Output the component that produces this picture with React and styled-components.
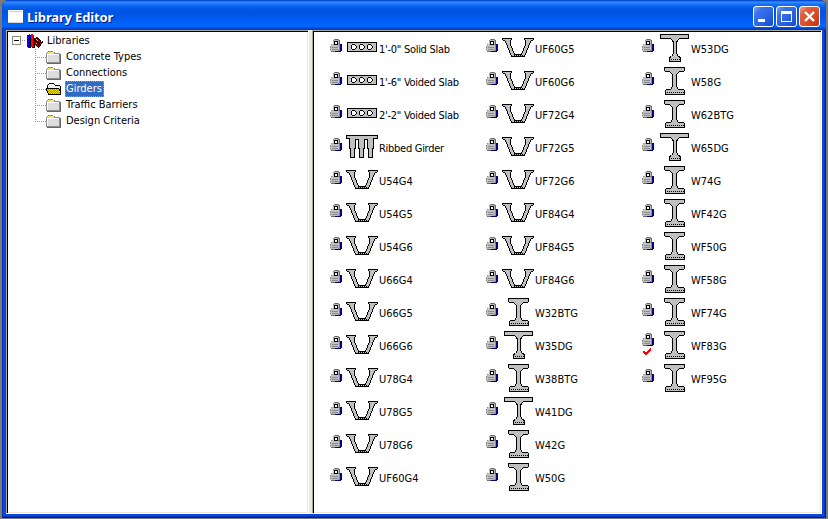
import React from "react";
import styled, { createGlobalStyle, css } from "styled-components";

const GlobalStyle = createGlobalStyle`
  html, body { margin: 0; height: 100%; overflow: hidden; background: #7d7b7a; }
  * { box-sizing: border-box; }
  svg { display: block; flex: none; }
`;

const Desktop = styled.div`
  width: 828px;
  height: 519px;
  padding: 0 2px 1px;
  background: #7d7b7a;
  font-family: "DejaVu Sans Condensed", "DejaVu Sans", sans-serif;
  font-stretch: condensed;
  font-size: 11px;
  color: #000;
`;

const Window = styled.div`
  height: 518px;
  display: flex;
  flex-direction: column;
  padding: 0 4px 4px;
  border-radius: 7px 7px 0 0;
  overflow: hidden;
  background: #0b48de;
  box-shadow: inset 1px 0 #0831b8, inset -1px 0 #001a94, inset -2px 0 #0636c4, inset 0 -1px #001a94, inset 0 -2px #0636c4;
`;

const TitleBar = styled.header`
  height: 30px;
  flex: none;
  display: flex;
  align-items: center;
  margin: 0 -4px;
  padding: 3px 6px 0 6px;
  background: linear-gradient(
    #0644c8 0, #0a55e0 1px, #3a91ff 2px, #1674fa 4px, #0560ea 7px,
    #0054e3 10px, #0055e5 15px, #005cf2 20px, #0166ff 25px, #0162f5 27px, #0049d2 28px, #003dc0 30px
  );
`;

const Title = styled.h1`
  flex: 1;
  margin: 0 0 0 4px;
  font: bold 13px/18px "Noto Sans", sans-serif;
  letter-spacing: -0.15px;
  color: #fff;
  text-shadow: 1px 1px #0a1883;
`;

const Buttons = styled.div`
  display: flex;
  gap: 2px;
`;

const CaptionButton = styled.button`
  width: 21px;
  height: 21px;
  padding: 0;
  border: 1px solid #fff;
  border-radius: 3px;
  background: ${(p) =>
    p.$close
      ? "linear-gradient(135deg, #f0a088 0, #e0603c 25%, #dc4c24 60%, #b83410 100%)"
      : "linear-gradient(135deg, #7ba4f4 0, #3c72ea 25%, #2860e2 65%, #1748c4 100%)"};
`;

const Client = styled.div`
  flex: 1;
  display: flex;
  background: #ece9d8;
`;

const pane = css`
  background: #fff;
  border-style: solid;
  border-width: 1px;
  border-color: #aca899 #fff #fff #aca899;
  box-shadow: inset 1px 1px #000, inset -1px -1px #ece9d8;
`;

const TreePane = styled.nav`
  ${pane}
  width: 303px;
  padding: 2px 0 0 5px;
`;

const ListPane = styled.main`
  ${pane}
  flex: 1;
  margin-left: 3px;
  padding: 2px 0 0 17px;
  display: grid;
  grid-auto-flow: column;
  grid-template-rows: repeat(14, 33px);
  grid-template-columns: repeat(3, 156px);
`;

const TreeRow = styled.div`
  height: 16px;
  display: flex;
  align-items: center;
`;

const TreeLabel = styled.span`
  height: 16px;
  line-height: 15px;
  margin-left: ${(p) => (p.$root ? 3 : 4)}px;
  padding: 0 2px 0 1px;
  white-space: nowrap;
  ${(p) =>
    p.$selected &&
    css`
      color: #fff;
      background: #316ac5;
      outline: 1px dotted #ce953a;
      outline-offset: -1px;
    `}
`;

const Item = styled.div`
  height: 33px;
  display: flex;
  align-items: flex-start;
`;

const StateIcon = styled.div`
  width: 12px;
  height: 24px;
  padding-top: ${(p) => (p.$checked ? 3 : 6)}px;
  margin-right: 4px;
`;

const ItemLabel = styled.span`
  margin-left: 1px;
  line-height: 34px;
  letter-spacing: ${(p) => (p.$tight ? -0.28 : 0)}px;
  white-space: nowrap;
`;

const COLORS = {
  k: "#000", d: "#686868", g: "#c0c0c0", s: "#8c8c8c", n: "#000080", w: "#fff",
  r: "#f00", m: "#800000", b: "#0000ff", y: "#f4ee6c", p: "#d8d8d8", Y: "#f0e000", V: "#a89800",
};

function Pixels({ rows }) {
  const w = Math.max(...rows.map((r) => r.length));
  return (
    <svg width={w} height={rows.length} shapeRendering="crispEdges">
      {rows.flatMap((row, y) =>
        [...row].map((c, x) =>
          COLORS[c] ? <rect key={`${x}-${y}`} x={x} y={y} width="1" height="1" fill={COLORS[c]} /> : null
        )
      )}
    </svg>
  );
}

const LOCK = [
  "....sddds...",
  "...sggggsd..",
  "...gkkkkgd..",
  "...gkwwkgd..",
  "...gkwwngd..",
  ".sggkkknsdnn",
  ".ggggggggsnn",
  "sggggggggsnn",
  "sgssssssgsnn",
  "gggggggggsnn",
  "sgssssssgsnn",
  "ggggggggssnn",
  ".ddddnnnnnn.",
];

const CHECK = [
  ".......r",
  "......rr",
  ".....rrr",
  "rr..rrr.",
  "rrrrrr..",
  ".rrrr...",
  "..rr....",
];

const FOLDER = [
  "..sssss........",
  ".sypypyps......",
  "sypypypyssssss.",
  "swwwwwwwwwwwwsd",
  "swypypypypypysd",
  "swpypypypypypsd",
  "swypypypypypysd",
  "swpypypypypypsd",
  "swypypypypypysd",
  "swpypypypypypsd",
  "swypypypypypysd",
  "ssssssssssssssd",
  ".dddddddddddddd",
];

const OPEN_FOLDER = [
  "...kkkkk.......",
  "..kwwwwwk......",
  ".kwywywywkkkkk.",
  ".kwywywywywywyk",
  ".kywywywywywywk",
  "kkkkkkkkkkkkkyk",
  "kYVYVYVYVYVYVkk",
  "kVYVYVYVYVYVYkk",
  ".kVYVYVYVYVYVYk",
  ".kYVYVYVYVYVYVk",
  "..kYVYVYVYVYVYk",
  "..kkkkkkkkkkkkk",
];

const BOOKS = [
  "..b.rr..........",
  "bbbbrrr.........",
  "bbbbrrr.........",
  "bbnkrrm..mm.....",
  "bbnkrrmkmmmk....",
  "bbnkrrmkmgmmk...",
  "bbnkrrmkkmgmmk..",
  "bbnkrrmkmkkmmk.k",
  "bbnkrrmmmmkkmmkk",
  "bbnkrrmkmgmkkmk.",
  "bbnkrrmkkmmmkk..",
  "bbnkrrmkgkmmmk..",
  "bbbkrrrk.gkmk...",
  ".kkk.kkk...k....",
];

const stroke = { fill: "#c0c0c0", stroke: "#000", strokeWidth: 1, shapeRendering: "crispEdges" };

function Strands({ from, to, y }) {
  const xs = [];
  for (let x = from; x <= to; x += 2) xs.push(x);
  return xs.map((x) => <rect key={x} x={x} y={y} width="1" height="1" fill="#000" shapeRendering="crispEdges" />);
}

function Section({ kind }) {
  return (
    <svg width="32" height="32">
      {kind === "slab" && (
        <>
          <rect x="1.5" y="9.5" width="29" height="9" {...stroke} />
          {[8, 16, 24].map((x) => (
            <path key={x} d={`M${x - 1.5} 11.5h2l1.5 1.5v2l-1.5 1.5h-2l-1.5-1.5v-2z`} {...stroke} fill="#fff" />
          ))}
        </>
      )}
      {kind === "ribbed" && (
        <path d="M.5 3.5H31.5V6.5H27.5V16.5H26.5V25.5H22.5V16.5H21.5V7.5H18.5V16.5H17.5V25.5H13.5V16.5H12.5V7.5H9.5V16.5H8.5V25.5H4.5V16.5H3.5V6.5H.5Z" {...stroke} />
      )}
      {kind === "tub" && (
        <>
          <path d="M.5 5.5H9.5V6.5L8.5 7.5V11.5L12.5 21.5H19.5L23.5 11.5V7.5L22.5 6.5V5.5H31.5V6.5L28.5 8.5L26.5 13.5L22.5 23.5H9.5L5.5 13.5L3.5 8.5L.5 6.5Z" {...stroke} />
          <Strands from={12} to={20} y={22} />
        </>
      )}
      {kind === "beam" && (
        <>
          <path d="M6.5 1.5H26.5V4.5L25.5 5.5H21.5L18.5 8.5V20.5L20.5 23.5H25.5L26.5 24.5V28.5H7.5V24.5L8.5 23.5H12.5L14.5 20.5V8.5L11.5 5.5H7.5L6.5 4.5Z" {...stroke} />
          <Strands from={9} to={25} y={26} />
        </>
      )}
      {kind === "deck" && (
        <>
          <path d="M2.5 1.5H30.5V5.5H21.5L19.5 7.5L18.5 9.5V20.5L20.5 23.5L22.5 24.5V28.5H11.5V24.5L13.5 23.5L15.5 20.5V9.5L14.5 7.5L12.5 5.5H2.5Z" {...stroke} />
          <Strands from={13} to={21} y={26} />
        </>
      )}
    </svg>
  );
}

function RootConnector() {
  return (
    <svg width="15" height="16" shapeRendering="crispEdges">
      <rect x=".5" y="3.5" width="8" height="8" fill="#fff" stroke="#8a8a78" />
      <path d="M2 7.5H7" stroke="#000" />
      <path d="M10 7.5H14" stroke="#9a9a9a" strokeDasharray="1 1" />
    </svg>
  );
}

function BranchConnector({ last }) {
  return (
    <svg width="34" height="16" shapeRendering="crispEdges">
      <path d={`M23.5 0V${last ? 9 : 16}M23 8.5H34`} stroke="#9a9a9a" strokeDasharray="1 1" fill="none" />
    </svg>
  );
}

const categories = ["Concrete Types", "Connections", "Girders", "Traffic Barriers", "Design Criteria"];

const girders = [
  ["1'-0\" Solid Slab", "slab"], ["1'-6\" Voided Slab", "slab"], ["2'-2\" Voided Slab", "slab"],
  ["Ribbed Girder", "ribbed"],
  ...["U54G4", "U54G5", "U54G6", "U66G4", "U66G5", "U66G6", "U78G4", "U78G5", "U78G6",
    "UF60G4", "UF60G5", "UF60G6", "UF72G4", "UF72G5", "UF72G6", "UF84G4", "UF84G5", "UF84G6"].map((n) => [n, "tub"]),
  ["W32BTG", "beam"], ["W35DG", "deck"], ["W38BTG", "beam"], ["W41DG", "deck"], ["W42G", "beam"],
  ["W50G", "beam"], ["W53DG", "deck"], ["W58G", "beam"], ["W62BTG", "beam"], ["W65DG", "deck"],
  ...["W74G", "WF42G", "WF50G", "WF58G", "WF74G", "WF83G", "WF95G"].map((n) => [n, "beam"]),
];

export default function App() {
  return (
    <Desktop>
      <GlobalStyle />
      <Window>
        <TitleBar>
          <svg width="15" height="13" shapeRendering="crispEdges">
            <rect width="15" height="13" fill="#fff" />
            <rect x="1" y="1" width="13" height="1" fill="#b8d4f8" />
            <rect y="12" width="15" height="1" fill="#d8d4c8" />
          </svg>
          <Title>Library Editor</Title>
          <Buttons>
            <CaptionButton aria-label="Minimize">
              <svg width="19" height="19"><rect x="4" y="12" width="7" height="3" fill="#fff" /></svg>
            </CaptionButton>
            <CaptionButton aria-label="Maximize">
              <svg width="19" height="19" shapeRendering="crispEdges">
                <path d="M4.5 5V14.5H14.5V5" fill="none" stroke="#fff" />
                <rect x="4" y="4" width="11" height="3" fill="#fff" />
              </svg>
            </CaptionButton>
            <CaptionButton $close aria-label="Close">
              <svg width="19" height="19"><path d="M5 5L14 14M14 5L5 14" stroke="#fff" strokeWidth="2.4" /></svg>
            </CaptionButton>
          </Buttons>
        </TitleBar>
        <Client>
          <TreePane>
            <TreeRow>
              <RootConnector />
              <Pixels rows={BOOKS} />
              <TreeLabel $root>Libraries</TreeLabel>
            </TreeRow>
            {categories.map((name, i) => (
              <TreeRow key={name}>
                <BranchConnector last={i === categories.length - 1} />
                <Pixels rows={name === "Girders" ? OPEN_FOLDER : FOLDER} />
                <TreeLabel $selected={name === "Girders"}>{name}</TreeLabel>
              </TreeRow>
            ))}
          </TreePane>
          <ListPane>
            {girders.map(([name, kind]) => (
              <Item key={name}>
                <StateIcon $checked={name === "WF83G"}>
                  <Pixels rows={LOCK} />
                  {name === "WF83G" && <Pixels rows={["", "", ...CHECK.map((r) => "." + r)]} />}
                </StateIcon>
                <Section kind={kind} />
                <ItemLabel $tight={kind === "slab" || kind === "ribbed"}>{name}</ItemLabel>
              </Item>
            ))}
          </ListPane>
        </Client>
      </Window>
    </Desktop>
  );
}
